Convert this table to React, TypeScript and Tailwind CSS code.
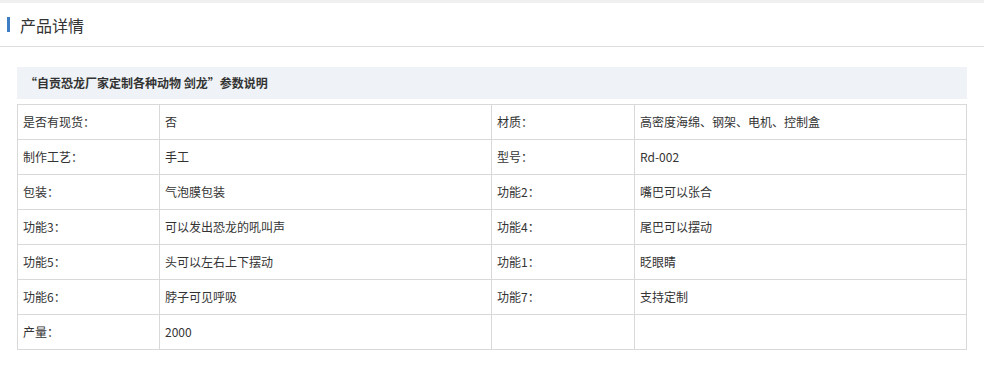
import React from "react";

const rows: [string, string, string, string][] = [
  ["是否有现货：", "否", "材质：", "高密度海绵、钢架、电机、控制盒"],
  ["制作工艺：", "手工", "型号：", "Rd-002"],
  ["包装：", "气泡膜包装", "功能2：", "嘴巴可以张合"],
  ["功能3：", "可以发出恐龙的吼叫声", "功能4：", "尾巴可以摆动"],
  ["功能5：", "头可以左右上下摆动", "功能1：", "眨眼睛"],
  ["功能6：", "脖子可见呼吸", "功能7：", "支持定制"],
  ["产量：", "2000", "", ""],
];

export default function App() {
  return (
    <div
      className="w-[984px] h-[367px] bg-white text-[#333]"
      style={{ fontFamily: '"Microsoft YaHei", "Noto Sans CJK SC", "Noto Sans", sans-serif' }}
    >
      <div className="h-[3px] bg-[#f0f0f0]" />
      <div className="h-[44px] border-b border-[#dddddd] flex items-center">
        <div className="w-[3px] h-[15px] bg-[#3c7dc4] ml-[7px] mr-[10px]" />
        <span className="text-[16px] leading-none text-[#333]">产品详情</span>
      </div>
      <div className="pl-[17px] pt-[20px] w-[967px]">
        <div className="h-[32px] bg-[#eff3f7] flex items-center pl-[8px] text-[12px] font-bold text-[#333]">
          “自贡恐龙厂家定制各种动物 剑龙”参数说明
        </div>
        <table className="border-collapse mt-[5px] w-[949px] table-fixed text-[12px]">
          <colgroup>
            <col className="w-[142px]" />
            <col className="w-[332px]" />
            <col className="w-[143px]" />
            <col className="w-[332px]" />
          </colgroup>
          <tbody>
            {rows.map((r, i) => (
              <tr key={i} className="h-[35px]">
                {r.map((c, j) => (
                  <td
                    key={j}
                    className="border border-[#d9d9d9] px-[5px] align-middle leading-[34px] text-[#333]"
                  >
                    {c}
                  </td>
                ))}
              </tr>
            ))}
          </tbody>
        </table>
      </div>
    </div>
  );
}
